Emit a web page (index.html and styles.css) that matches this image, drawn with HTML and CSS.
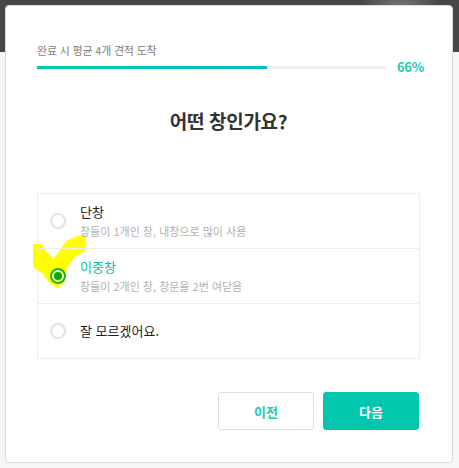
FILE: index.html
```html
<!DOCTYPE html>
<html lang="ko">
<head>
<meta charset="utf-8">
<link rel="stylesheet" href="styles.css">
</head>
<body>
<div class="backdrop">
  <div class="modal">
    <div class="progress-label">완료 시 평균 4개 견적 도착</div>
    <div class="progress-row">
      <div class="track"><div class="fill" style="width:66%"></div></div>
      <div class="pct">66%</div>
    </div>
    <h2 class="title">어떤 창인가요?</h2>
    <div class="options">
      <svg class="mark" width="60" height="60" viewBox="0 0 60 60">
        <polygon fill="#ffff00" points="4,13 12,13 18,21 25,28 31,19 37,10 46,6 57,3 57,19 46,26 38,36 36,50 29,57 21,53 14,43 4,36"/>
      </svg>
      <div class="option">
        <span class="radio"></span>
        <div class="texts">
          <div class="opt-title">단창</div>
          <div class="opt-sub">창들이 1개인 창, 내창으로 많이 사용</div>
        </div>
      </div>
      <div class="option selected">
        <span class="radio"></span>
        <div class="texts">
          <div class="opt-title">이중창</div>
          <div class="opt-sub">창들이 2개인 창, 창문을 2번 여닫음</div>
        </div>
      </div>
      <div class="option">
        <span class="radio"></span>
        <div class="texts">
          <div class="opt-title">잘 모르겠어요.</div>
        </div>
      </div>
    </div>
    <div class="buttons">
      <button class="btn btn-prev">이전</button>
      <button class="btn btn-next">다음</button>
    </div>
  </div>
</div>
</body>
</html>
```

FILE: styles.css
```css
html, body {
  margin: 0;
  padding: 0;
}
body {
  font-family: "Noto Sans CJK KR", "Noto Sans", sans-serif;
  background:
    radial-gradient(ellipse 40px 30px at 400px 10px, #7a7a7a, rgba(0,0,0,0)),
    linear-gradient(to bottom, #474747 0, #474747 52px, #f6f6f6 52px);
  background-repeat: no-repeat;
  background-color: #f6f6f6;
  width: 459px;
  height: 468px;
  overflow: hidden;
}
.backdrop {
  padding: 5px 6px 0 5px;
}
.modal {
  box-sizing: border-box;
  width: 448px;
  height: 458px;
  background: #fff;
  border: 1px solid #dcdcdc;
  border-radius: 4px;
  padding: 36px 32px 0 31px;
}
.progress-label {
  font-size: 11px;
  line-height: 16px;
  color: #7d7d7d;
  letter-spacing: -0.2px;
}
.progress-row {
  display: flex;
  align-items: center;
  height: 18px;
}
.track {
  flex: 1;
  height: 3px;
  background: #efefef;
}
.fill {
  height: 3px;
  background: linear-gradient(to right, #00c7ad, #00b9c6);
}
.pct {
  margin-left: 11px;
  width: 23px;
  font-size: 13px;
  font-weight: 700;
  color: #1fc8b0;
  line-height: 18px;
  text-align: right;
  letter-spacing: -0.3px;
}
.title {
  margin: 32px 0 0;
  font-size: 19px;
  line-height: 26px;
  font-weight: 700;
  color: #333;
  text-align: center;
  letter-spacing: -0.3px;
}
.options {
  position: relative;
  margin-top: 59px;
  border: 1px solid #ececec;
}
.mark {
  position: absolute;
  left: -9px;
  top: 37px;
  z-index: 0;
}
.option {
  position: relative;
  display: flex;
  align-items: center;
  height: 54px;
  padding-left: 12px;
  border-bottom: 1px solid #ececec;
}
.option:last-child {
  border-bottom: none;
}
.radio {
  position: relative;
  z-index: 1;
  box-sizing: border-box;
  width: 16px;
  height: 16px;
  border: 2px solid #e2e2e2;
  border-radius: 50%;
  background: #fff;
  margin-right: 14px;
  flex: none;
}
.selected .radio {
  border-color: #1fb41f;
  background: #f4ff9e;
}
.selected .radio::after {
  content: "";
  position: absolute;
  left: 2px;
  top: 2px;
  width: 8px;
  height: 8px;
  border-radius: 50%;
  background: #00b000;
}
.texts {
  display: flex;
  flex-direction: column;
  gap: 2px;
}
.opt-title {
  font-size: 13px;
  line-height: 18px;
  color: #222;
  font-weight: 400;
}
.selected .opt-title {
  color: #00bfa6;
}
.opt-sub {
  font-size: 11px;
  line-height: 16px;
  color: #b0b0b0;
}
.buttons {
  display: flex;
  justify-content: flex-end;
  gap: 9px;
  margin-top: 33px;
  padding-right: 1px;
}
.btn {
  box-sizing: border-box;
  width: 96px;
  height: 38px;
  border-radius: 3px;
  font-family: inherit;
  font-size: 13px;
  font-weight: 700;
  cursor: pointer;
}
.btn-prev {
  background: #fff;
  border: 1px solid #dedede;
  color: #1fc8b0;
}
.btn-next {
  background: #00c7ae;
  border: 1px solid #00c7ae;
  color: #fff;
}
```
